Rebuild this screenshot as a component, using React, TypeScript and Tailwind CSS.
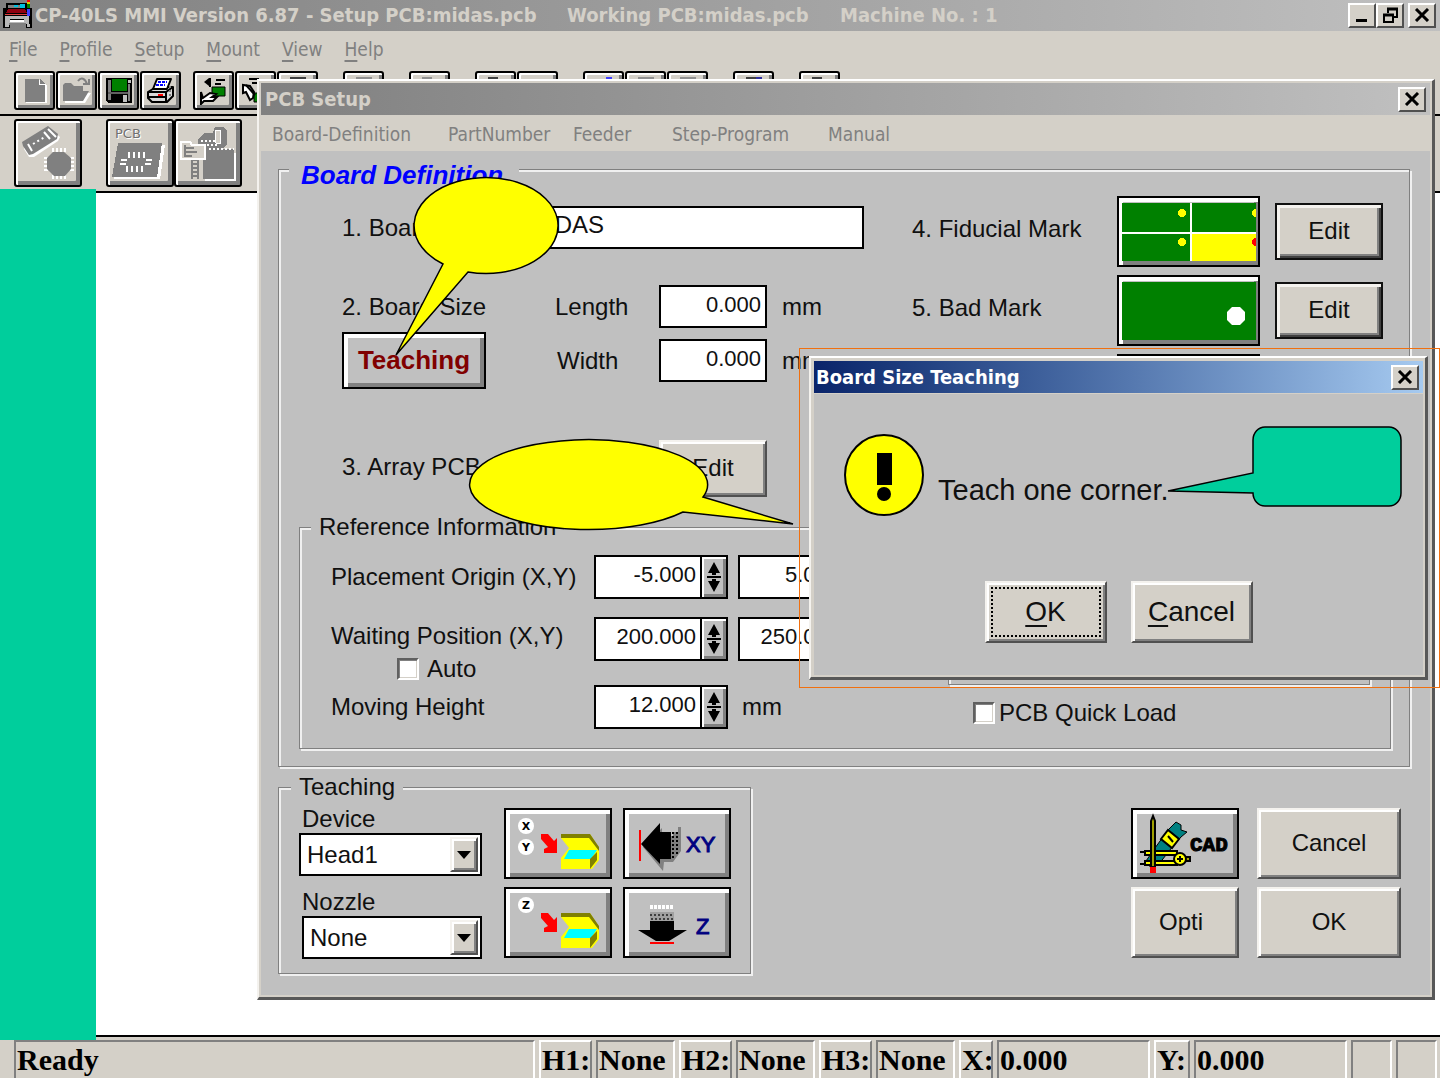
import type { ReactNode } from 'react';
import clsx from 'clsx';

const RAISED =
  'bg-[#d4d0c8] border-2 border-t-[#f4f2ee] border-l-[#f4f2ee] border-b-[#505050] border-r-[#505050] shadow-[inset_2px_2px_0_#ffffff,inset_-2px_-2px_0_#808080]';
const PICTURE =
  'bg-[#c0c0c0] border-2 border-black shadow-[inset_4px_4px_0_#ffffff,inset_-4px_-4px_0_#808080]';
const ETCHED = 'border border-[#808080] shadow-[inset_2px_2px_0_#f0f0f0,2px_2px_0_#f0f0f0]';
const WINDOW =
  'border-2 border-r-[3px] border-b-[3px] border-t-white border-l-[#f4f2ee] border-r-[#585858] border-b-[#585858] bg-[#d4d0c8] p-0.5';
const TITLE_FONT = "font-['DejaVu_Sans_Condensed','Noto_Sans',sans-serif]";

const mainMenu = ['File', 'Profile', 'Setup', 'Mount', 'View', 'Help'];

/* Icons */

function CloseIcon() {
  return (
    <svg width="16" height="14" viewBox="0 0 16 14" aria-hidden="true">
      <path d="M2 1L14 13M14 1L2 13" stroke="#000" strokeWidth="3" fill="none" />
    </svg>
  );
}

function MinimizeIcon() {
  return (
    <svg width="16" height="16" viewBox="0 0 16 16" aria-hidden="true">
      <path d="M2 12h11v3H2z" fill="#000" />
    </svg>
  );
}

function RestoreIcon() {
  return (
    <svg width="16" height="16" viewBox="0 0 16 16" fill="none" stroke="#000" strokeWidth="2" aria-hidden="true">
      <path d="M6 6V2h9v8h-3" />
      <path d="M5 2h11" strokeWidth="3" />
      <path d="M2 8h9v7H2z" />
      <path d="M1 8h11" strokeWidth="3" />
    </svg>
  );
}

function MachineIcon() {
  return (
    <svg width="30" height="30" viewBox="0 0 30 30" shapeRendering="crispEdges" aria-hidden="true">
      <path d="M3 3h22v5h4v20h-6v-3H7v3H0V8h3z" fill="#000" />
      <path d="M5 5h13v3H5z" fill="#808080" />
      <path d="M5 9h17l2 4H3z" fill="#900010" />
      <path d="M2 14h25v1H2z" fill="#e04040" />
      <path d="M2 16h24v8H2zM2 24h4v3H2zM24 24h3v3h-3z" fill="#b8b8b8" />
      <path d="M7 19h14v1H7z" fill="#000" />
      <path d="M7 20h14v2H7z" fill="#fff" />
      <path d="M6 23h17v2H6z" fill="#808080" />
      <path d="M17 4h5v4h-5zM11 5h4v2h-4z" fill="#00c0e0" />
      <path d="M24 9h3v7h-3z" fill="#4040ff" />
      <path d="M24 0h3v2h-3z" fill="#ff0000" />
      <path d="M24 2h3v2h-3z" fill="#d0d000" />
      <path d="M24 4h3v4h-3z" fill="#008000" />
    </svg>
  );
}

function NewIcon() {
  return (
    <svg width="30" height="28" viewBox="0 0 30 28" shapeRendering="crispEdges">
      <path d="M6 3h15l6 6v17H6z" fill="#fff" />
      <path d="M5 2h14v6h6v17H5z" fill="#808080" />
      <path d="M20 2l5 5h-5z" fill="#808080" />
    </svg>
  );
}

function OpenIcon() {
  return (
    <svg width="30" height="28" viewBox="0 0 30 28">
      <path d="M3 26V9h8l2 3h8v4h8l-6 10z" fill="#fff" />
      <path d="M1 24V8l2-2h6l3 3h9v5h6l-6 10z" fill="#808080" />
      <path d="M16 4c3-4 7-3 9 3M21 7h6V2" fill="none" stroke="#808080" strokeWidth="2" />
    </svg>
  );
}

function SaveIcon() {
  return (
    <svg width="30" height="28" viewBox="0 0 30 28" shapeRendering="crispEdges">
      <path d="M2 1h26v25H4l-2-2z" fill="#000" />
      <path d="M4 3h3v20H4zM24 7h2v17h-2z" fill="#808080" />
      <path d="M8 2h15v12H8z" fill="#008000" />
      <path d="M24 3h3v3h-3z" fill="#c0c0c0" />
      <path d="M19 18h4v7h-4z" fill="#c0c0c0" />
      <path d="M4 15h20v2H4z" fill="#606060" />
    </svg>
  );
}

function PrintIcon() {
  return (
    <svg width="30" height="28" viewBox="0 0 30 28" stroke="#000" strokeWidth="2" strokeLinejoin="round">
      <path d="M2 15l8-5h17v9l-6 6H6l-4-4z" fill="#d8d8d8" />
      <path d="M7 12l4-10h14l-4 10z" fill="#fff" />
      <path d="M2 15h18l7-5M20 15v9M3 20h17" fill="none" />
      <path d="M12 5h9M10 8h9" stroke="#0000ff" strokeDasharray="3 1" />
      <path d="M12 18h5" stroke="#ff0000" />
      <path d="M24 9v10" stroke="#808080" strokeDasharray="2 2" />
    </svg>
  );
}

function BoardInIcon() {
  return (
    <svg width="30" height="28" viewBox="0 0 30 28">
      <path d="M13 10h13v9H13z" fill="#008000" stroke="#000" />
      <path d="M11 1v9M17 3h9M16 7h6" fill="none" stroke="#000" strokeWidth="2" />
      <path d="M5 5l5-4v8z" />
      <path d="M2 15v12l3-3h9l4-4h-5l4-3-6-1-7 5z" fill="#fff" stroke="#000" strokeWidth="2" />
    </svg>
  );
}

function BoardOutIcon() {
  return (
    <svg width="30" height="28" viewBox="0 0 30 28">
      <path d="M13 16h13v9H13z" fill="#008000" stroke="#000" />
      <path d="M8 2h10M11 6h8" fill="none" stroke="#000" strokeWidth="2" />
      <path d="M2 8v8l3-1 4 8 3-2 1-6-4-6z" fill="#fff" stroke="#000" strokeWidth="2" />
      <path d="M5 8l9 10" stroke="#000" strokeWidth="2" />
    </svg>
  );
}

function BarIcon({ color = '#404040', accent = color }: { color?: string; accent?: string }) {
  return (
    <svg width="30" height="28" viewBox="0 0 30 28" shapeRendering="crispEdges">
      <path d="M7 0h10v2H7z" fill={color} />
      <path d="M17 0h6v2h-6z" fill={accent} />
    </svg>
  );
}

function PartsIcon() {
  return (
    <svg width="56" height="56" viewBox="0 0 56 56">
      <path d="M4 19L29 3l11 9-2 4-24 16h-5L4 24z" fill="#fff" />
      <path d="M2 17L28 1l10 8-1 5-24 15-4 1-6-9z" fill="#808080" />
      <path d="M8 19l4 7M24 7l6 7M28 4l8 8" stroke="#fff" strokeWidth="2" />
      <path d="M13 19l12-7" stroke="#fff" strokeWidth="2" strokeDasharray="2 3" />
      <path
        d="M33 27v-4M37 27v-4M41 27v-4M45 27v-4M33 50v4M37 50v4M41 50v4M45 50v4M28 33h-4M28 37h-4M28 41h-4M28 45h-4M50 33h4M50 37h4M50 41h4M50 45h4"
        stroke="#fff"
        strokeWidth="2"
      />
      <path d="M27 33l6-6h11l7 6v11l-6 7H34l-7-7z" fill="#808080" />
    </svg>
  );
}

function PcbIcon() {
  return (
    <svg width="56" height="56" viewBox="0 0 56 56" shapeRendering="crispEdges">
      <text x="4" y="14" fontSize="13" fontFamily="DejaVu Sans" fill="#fff">
        PCB
      </text>
      <text x="3" y="13" fontSize="13" fontFamily="DejaVu Sans" fill="#707070">
        PCB
      </text>
      <path d="M8 20h45l-5 34H2z" fill="#fff" />
      <path d="M6 18h44l-5 34H0z" fill="#808080" />
      <path
        d="M17 27v6M22 27v6M27 27v6M32 27v6M15 41v6M20 41v6M25 41v6M30 41v6M9 35h6M8 39h6M34 35h6M33 39h6"
        stroke="#fff"
        strokeWidth="2"
      />
    </svg>
  );
}

function FeederIcon() {
  return (
    <svg width="58" height="56" viewBox="0 0 58 56" shapeRendering="crispEdges">
      <path d="M26 28h31v28H26z" fill="#fff" />
      <path d="M24 24h31v30H24zM12 34h8v20h-8z" fill="#808080" />
      <path d="M19 14l6-6h9l2-6h8l4 4v14l-8 6H23l-4-6z" fill="#808080" />
      <path d="M36 5h5v13h-4z" fill="#d4d0c8" stroke="#fff" />
      <path d="M22 16h16M24 20h14M30 24h25" stroke="#fff" strokeWidth="2" strokeDasharray="2 2" />
      <path d="M2 17h9l2 3h13v14H2z" fill="#d4d0c8" stroke="#fff" strokeWidth="2" />
      <path d="M6 20v12M6 23h9M6 27h12M6 31h7" stroke="#808080" strokeWidth="2" />
      <path d="M16 36v18" stroke="#d4d0c8" strokeWidth="4" strokeDasharray="2 2" />
    </svg>
  );
}

function FiducialPicture() {
  return (
    <svg className="block" width="134" height="58" viewBox="0 0 134 58" shapeRendering="crispEdges">
      <path d="M0 0h134v58H0z" fill="#008000" />
      <path d="M70 30h64v28H70z" fill="#ffff00" />
      <path d="M69 0v58M0 30h134" stroke="#fff" strokeWidth="2" />
      <circle cx="60" cy="10" r="4" fill="#ffff00" />
      <circle cx="60" cy="39" r="4" fill="#ffff00" />
      <circle cx="134" cy="10" r="4" fill="#ffff00" />
      <circle cx="134" cy="39" r="4" fill="#ff0000" />
    </svg>
  );
}

function BadMarkPicture() {
  return (
    <svg className="block" width="134" height="58" viewBox="0 0 134 58">
      <path d="M0 0h134v58H0z" fill="#008000" />
      <path d="M110 25h8l5 5v8l-5 5h-8l-5-5v-8z" fill="#fff" />
    </svg>
  );
}

function FeederTeachIcon({ marks }: { marks: string[] }) {
  return (
    <svg width="98" height="62" viewBox="0 0 98 62">
      {marks.map((mark, i) => (
        <g key={mark}>
          <circle cx="17" cy={13 + i * 21} r="8" fill="#fff" />
          <text
            x="17"
            y={17 + i * 21}
            textAnchor="middle"
            fontSize="11"
            fontWeight="bold"
            fontFamily="DejaVu Sans"
          >
            {mark}
          </text>
        </g>
      ))}
      <path d="M32 21h7l6 7 3-3v15H35v-4l4-2-7-8z" fill="#ff0000" />
      <path d="M52 21h29l9 14v12l-7 9H52V45l8-10-8-10z" fill="#ffff00" />
      <path d="M52 21h29l9 13v4L80 25H52z" fill="#808000" />
      <path d="M60 37h28l-6 9H55z" fill="#00ffff" />
      <path d="M88 39v8l-7 9V46z" fill="#808000" />
    </svg>
  );
}

function MoveXYIcon() {
  return (
    <svg width="98" height="62" viewBox="0 0 98 62">
      <path d="M15 17v31" stroke="#ff0000" strokeWidth="2" />
      <path d="M18 34l19-19v8h11v-4h5v-5h3v24l-8 11h-9l-1 9z" fill="#808080" />
      <path d="M16 31L35 10v9h11v27H35v5z" fill="#000" />
      <path d="M48 19v27M52 19v24" stroke="#000" strokeWidth="2" strokeDasharray="2 2" />
      <text x="61" y="39" fontSize="22" fontFamily="Liberation Sans" fill="#000080" stroke="#000080">
        XY
      </text>
    </svg>
  );
}

function MoveZIcon() {
  return (
    <svg width="98" height="62" viewBox="0 0 98 62">
      <path d="M25 15h24" stroke="#fff" strokeWidth="4" strokeDasharray="3 1" />
      <path d="M25 20h24v10H25z" fill="#a0a0a0" />
      <path d="M25 23h24M26 27h24" stroke="#404040" strokeWidth="2" strokeDasharray="2 2" />
      <path d="M25 29h24v9h13l-18 11H31L13 38h12z" fill="#000" />
      <path d="M25 51h24" stroke="#ff0000" strokeWidth="2" />
      <text x="71" y="42" fontSize="22" fontFamily="Liberation Sans" fill="#000080" stroke="#000080">
        Z
      </text>
    </svg>
  );
}

function CadIcon() {
  return (
    <svg width="98" height="62" viewBox="0 0 98 62">
      <path d="M13 48l9-13 13-18 8-8 5 3v5l6 2-6 5-8 9-14 18-8 4z" fill="#008080" stroke="#000" />
      <path d="M35 17l11 9-7 9-11-9z" fill="#ffff00" stroke="#000" strokeWidth="2" />
      <path d="M35 23l5 6" stroke="#000" strokeWidth="2" />
      <path d="M12 38h32v4H12zM12 48h32v4H12z" fill="#ffff00" stroke="#000" strokeWidth="2" />
      <path d="M7 39h6M7 51h6" stroke="#000" strokeWidth="2" />
      <path d="M50 44h7v4h-7z" fill="#a0a000" stroke="#000" strokeWidth="2" />
      <circle cx="47" cy="46" r="6" fill="#ffff00" stroke="#000" strokeWidth="2" />
      <path d="M44 46h6M47 43v6" stroke="#000" strokeWidth="2" />
      <path d="M18 8l2-5 2 5v46h-4z" fill="#a0a000" stroke="#000" strokeWidth="2" />
      <path d="M17 54h6v6h-6z" fill="#ff0000" />
      <text x="57" y="38" fontSize="21" fontWeight="bold" fontFamily="Liberation Mono" stroke="#000">
        CAD
      </text>
    </svg>
  );
}

/* Controls */

function CaptionButton({ label, children }: { label: string; children: ReactNode }) {
  return (
    <button
      aria-label={label}
      className="flex h-[25px] w-7 items-center justify-center border-2 border-t-white border-l-white border-r-[#505050] border-b-[#505050] bg-[#d4d0c8]"
    >
      {children}
    </button>
  );
}

function ToolButton({ label, children }: { label: string; children?: ReactNode }) {
  return (
    <button
      aria-label={label}
      className="flex h-[39px] w-[41px] items-center justify-center rounded-[3px] border-2 border-black bg-[#d4d0c8] shadow-[inset_2px_2px_0_#ffffff,inset_-3px_-3px_0_#808080]"
    >
      {children}
    </button>
  );
}

function BigToolButton({ label, children }: { label: string; children: ReactNode }) {
  return (
    <button
      aria-label={label}
      className="flex h-[68px] w-[68px] items-center justify-center rounded-[3px] border-2 border-black bg-[#d4d0c8] shadow-[inset_2px_2px_0_#ffffff,inset_-4px_-4px_0_#808080]"
    >
      {children}
    </button>
  );
}

function EditButton({ outlined = false }: { outlined?: boolean }) {
  return (
    <button
      className={clsx(
        'h-[57px] w-[108px] pb-0.5',
        outlined
          ? 'border-2 border-[#101010] bg-[#d4d0c8] shadow-[inset_3px_3px_0_#f4f2ee,inset_-2px_-2px_0_#404040,inset_-4px_-4px_0_#808080]'
          : RAISED,
      )}
    >
      Edit
    </button>
  );
}

function NumberField({ label, value }: { label: string; value: string }) {
  return (
    <input
      aria-label={label}
      defaultValue={value}
      className="h-[43px] w-[108px] border-2 border-black bg-white pr-1 pb-1 text-right text-[22px]"
    />
  );
}

function SpinField({ label, value }: { label: string; value: string }) {
  return (
    <div className="flex h-11 w-[134px]">
      <input
        aria-label={label}
        defaultValue={value}
        className="w-[108px] border-2 border-black bg-white pr-1 pb-1 text-right text-[22px]"
      />
      <div className="flex w-[26px] flex-col border-2 border-l-0 border-black bg-[#c0c0c0] shadow-[inset_2px_2px_0_#ffffff,inset_-3px_-3px_0_#808080]">
        <button aria-label={`${label} up`} className="flex flex-1 items-end justify-center">
          <svg width="14" height="15" viewBox="0 0 14 15">
            <path d="M7 0l6 11H9v2H5v-2H1zM0 14h14v1H0z" />
          </svg>
        </button>
        <button aria-label={`${label} down`} className="flex flex-1 items-start justify-center">
          <svg width="14" height="15" viewBox="0 0 14 15">
            <path d="M0 0h14v1H0zM5 2h4v2h4L7 15 1 4h4z" />
          </svg>
        </button>
      </div>
    </div>
  );
}

function CheckField({ label, gap }: { label: string; gap: string }) {
  return (
    <label className={clsx('flex h-6 items-center', gap)}>
      <input
        type="checkbox"
        className="h-[22px] w-[22px] appearance-none border-2 border-t-[#606060] border-l-[#606060] border-r-white border-b-white bg-white shadow-[inset_1px_1px_0_#808080,inset_-1px_-1px_0_#d4d0c8]"
      />
      {label}
    </label>
  );
}

function DropDown({ id, label, value, inset }: { id: string; label: string; value: string; inset?: boolean }) {
  return (
    <div className="flex flex-col">
      <label htmlFor={id} className="h-7 pl-[3px] leading-7">
        {label}
      </label>
      <div className={clsx('relative flex h-[43px]', inset && 'ml-[3px]')}>
        <select id={id} className="w-full appearance-none border-2 border-black bg-white pl-1.5">
          <option>{value}</option>
        </select>
        <span
          className={clsx(
            'pointer-events-none absolute top-1 right-1 flex h-[35px] w-7 items-center justify-center',
            RAISED,
          )}
        >
          <svg width="14" height="8" viewBox="0 0 14 8">
            <path d="M0 0h14L7 8z" />
          </svg>
        </span>
      </div>
    </div>
  );
}

function StatusCell({ children, width, raised }: { children?: ReactNode; width: string; raised?: boolean }) {
  return (
    <div
      className={clsx(
        'h-[38px] overflow-hidden border-2 border-b-0 pl-px whitespace-nowrap',
        raised
          ? 'border-t-white border-l-white border-r-[#808080]'
          : 'border-t-[#808080] border-l-[#808080] border-r-white',
        width,
      )}
    >
      {children}
    </div>
  );
}

/* Windows */

function PcbSetupWindow() {
  return (
    <section
      aria-label="PCB Setup"
      className={clsx('absolute top-[79px] right-[5px] left-[257px] text-2xl', WINDOW)}
    >
      <header
        className={clsx(
          'flex h-8 items-center justify-between bg-linear-to-r from-[#808080] to-[#c0c0c0] pr-1 pl-1 text-xl font-bold text-[#d4d0c8]',
          TITLE_FONT,
        )}
      >
        <h2>PCB Setup</h2>
        <CaptionButton label="Close PCB Setup">
          <CloseIcon />
        </CaptionButton>
      </header>
      <nav className={clsx('flex h-9 items-center pt-[3px] pl-[11px] text-[19px] text-[#808080]', TITLE_FONT)}>
        <a href="#board" className="w-44">Board-Definition</a>
        <a href="#part" className="w-[125px]">PartNumber</a>
        <a href="#feeder" className="w-[99px]">Feeder</a>
        <a href="#step" className="w-[156px]">Step-Program</a>
        <a href="#manual">Manual</a>
      </nav>

      <div className="bg-[#c0c0c0] pr-5 pb-[21px] pl-[17px]">
        <fieldset className={clsx('pb-[17px]', ETCHED)}>
          <legend className="ml-2.5 bg-[#c0c0c0] pt-3 pr-4 pl-3 text-[26px] leading-6 font-bold text-[#0000ff] italic">
            Board Definition
          </legend>

          <div className="flex justify-between pr-[26px] pl-[63px]">
            <div>
              <div className="mt-[19px] flex items-center">
                <label htmlFor="board-id" className="w-[178px]">1. Board ID</label>
                <input
                  id="board-id"
                  defaultValue="MIDAS"
                  className="h-[43px] w-[344px] border-2 border-black bg-white pb-1.5 pl-1.5"
                />
              </div>
              <div className="mt-9 flex items-center">
                <span className="w-[213px]">2. Board Size</span>
                <span className="w-[104px]">Length</span>
                <NumberField label="Length" value="0.000" />
                <span className="ml-[15px]">mm</span>
              </div>
              <div className="mt-1 flex items-center">
                <div className="w-[215px]">
                  <button className={clsx('h-[57px] w-36 text-[26px] font-bold text-[#800000]', PICTURE)}>
                    Teaching
                  </button>
                </div>
                <span className="w-[102px]">Width</span>
                <NumberField label="Width" value="0.000" />
                <span className="ml-[15px]">mm</span>
              </div>
              <div className="mt-[51px] flex items-center">
                <span className="w-[317px] pb-1">3. Array PCB</span>
                <EditButton />
              </div>
            </div>

            <div className="mt-[9px] flex flex-col gap-2">
              <div className="flex items-center gap-[15px]">
                <span className="w-[190px] pb-1.5">4. Fiducial Mark</span>
                <button aria-label="Fiducial mark picture" className={clsx('h-[71px] w-[143px] pl-[3px]', PICTURE)}>
                  <FiducialPicture />
                </button>
                <EditButton outlined />
              </div>
              <div className="flex items-center gap-[15px]">
                <span className="w-[190px] pb-1.5">5. Bad Mark</span>
                <button aria-label="Bad mark picture" className={clsx('h-[71px] w-[143px] pl-[3px]', PICTURE)}>
                  <BadMarkPicture />
                </button>
                <EditButton outlined />
              </div>
              <div className="flex items-center gap-[15px]">
                <span className="w-[190px]" />
                <button aria-label="Mark picture" className={clsx('h-[71px] w-[143px]', PICTURE)} />
              </div>
            </div>
          </div>

          <fieldset className={clsx('mt-4 mr-[18px] ml-5 flex justify-between pr-5 pb-[19px] pl-[31px]', ETCHED)}>
            <legend className="-ml-5 bg-[#c0c0c0] px-2 leading-7">Reference Information</legend>
            <div>
              <div className="mt-3.5 flex items-center">
                <span className="w-[263px]">Placement Origin (X,Y)</span>
                <SpinField label="Placement origin X" value="-5.000" />
                <div className="ml-2.5">
                  <SpinField label="Placement origin Y" value="5.000" />
                </div>
              </div>
              <div className="mt-[18px] flex items-center">
                <span className="w-[263px] pb-1.5">Waiting Position (X,Y)</span>
                <SpinField label="Waiting position X" value="200.000" />
                <div className="ml-2.5">
                  <SpinField label="Waiting position Y" value="250.000" />
                </div>
              </div>
              <div className="-mt-1 mb-1 ml-[66px]">
                <CheckField label="Auto" gap="gap-2" />
              </div>
              <div className="flex items-center">
                <span className="w-[263px]">Moving Height</span>
                <SpinField label="Moving height" value="12.000" />
                <span className="ml-3.5">mm</span>
              </div>
            </div>
            <div className="w-[422px]">
              <div className={clsx('mt-3.5 h-[130px]', ETCHED)} />
              <div className="mt-4 ml-[25px]">
                <CheckField label="PCB Quick Load" gap="gap-1" />
              </div>
            </div>
          </fieldset>
        </fieldset>

        <div className="mt-1.5 flex items-start justify-between">
          <fieldset className={clsx('pr-[19px] pb-3.5 pl-5', ETCHED)}>
            <legend className="-ml-2 bg-[#c0c0c0] px-2 leading-7">Teaching</legend>
            <div className="flex gap-[22px] pt-1">
              <div className="flex w-[183px] flex-col gap-3">
                <DropDown id="device" label="Device" value="Head1" />
                <DropDown id="nozzle" label="Nozzle" value="None" inset />
              </div>
              <div className="mt-[3px] grid grid-cols-2 content-start gap-x-[11px] gap-y-2">
                <button aria-label="Feeder XY" className={clsx('h-[71px] w-[108px] pl-[3px]', PICTURE)}>
                  <FeederTeachIcon marks={['X', 'Y']} />
                </button>
                <button aria-label="Move XY" className={clsx('h-[71px] w-[108px]', PICTURE)}>
                  <MoveXYIcon />
                </button>
                <button aria-label="Feeder Z" className={clsx('h-[71px] w-[108px] pl-[3px]', PICTURE)}>
                  <FeederTeachIcon marks={['Z']} />
                </button>
                <button aria-label="Move Z" className={clsx('h-[71px] w-[108px]', PICTURE)}>
                  <MoveZIcon />
                </button>
              </div>
            </div>
          </fieldset>

          <div className="mt-[35px] mr-[9px] grid grid-cols-[108px_144px] gap-x-[18px] gap-y-2">
            <button aria-label="CAD" className={clsx('h-[71px]', PICTURE)}>
              <CadIcon />
            </button>
            <button className={clsx('h-[71px] pb-0.5', RAISED)}>Cancel</button>
            <button className={clsx('h-[71px] pr-2 pb-0.5', RAISED)}>Opti</button>
            <button className={clsx('h-[71px] pb-0.5', RAISED)}>OK</button>
          </div>
        </div>
      </div>
    </section>
  );
}

function TeachingDialog() {
  return (
    <div className="absolute top-[348px] left-[799px] border border-[#f07010] pt-[7px] pr-[11px] pb-[7px] pl-[9px]">
      <section
        role="dialog"
        aria-label="Board Size Teaching"
        className={clsx('w-[619px] text-[29px]', WINDOW)}
      >
        <header
          className={clsx(
            'mt-px ml-px flex h-8 items-center justify-between bg-linear-to-r from-[#0a246a] to-[#a6caf0] pr-1 pl-0.5 text-xl font-bold text-white',
            TITLE_FONT,
          )}
        >
          <h2>Board Size Teaching</h2>
          <CaptionButton label="Close Board Size Teaching">
            <CloseIcon />
          </CaptionButton>
        </header>
        <div className="mt-px ml-px bg-[#c0c0c0] pt-10">
          <div className="flex items-start pl-[30px]">
            <svg width="80" height="84" viewBox="0 0 80 84" aria-hidden="true">
              <ellipse cx="40" cy="41" rx="39" ry="40" fill="#ffff00" stroke="#000" strokeWidth="2" />
              <path d="M33 19h15v32H33z" />
              <circle cx="40" cy="60" r="7" />
            </svg>
            <p className="mt-9 ml-3.5 leading-10">Teach one corner.</p>
          </div>
          <div className="mt-[63px] flex justify-center gap-6 pb-8 text-[28px]">
            <button className={clsx('h-[62px] w-[122px] p-1', RAISED)}>
              <span className="flex h-full items-center justify-center border-2 border-dotted border-black">
                <span>
                  <u className="decoration-2 underline-offset-4">O</u>K
                </span>
              </span>
            </button>
            <button className={clsx('h-[62px] w-[122px]', RAISED)}>
              <u className="decoration-2 underline-offset-4">C</u>ancel
            </button>
          </div>
        </div>
      </section>
    </div>
  );
}

function Callouts() {
  return (
    <svg
      className="pointer-events-none absolute top-0 left-0"
      width="1440"
      height="600"
      viewBox="0 0 1440 600"
      stroke="#000"
      strokeWidth="1.5"
      aria-hidden="true"
    >
      <path d="M443 264L396 355L468 272A72 48 0 1 0 443 264Z" fill="#ffff00" />
      <path d="M703 497L793 524L683 512A119 45 0 1 1 703 497Z" fill="#ffff00" />
      <path
        d="M1265 427h124a12 13 0 0 1 12 13v53a12 13 0 0 1-12 13h-124a12 13 0 0 1-12-13L1168 491L1253 473v-33a12 13 0 0 1 12-13Z"
        fill="#00ce9c"
      />
    </svg>
  );
}

export default function App() {
  return (
    <div className="relative flex min-h-screen flex-col overflow-hidden bg-[#d4d0c8] font-['Liberation_Sans',Arial,sans-serif] text-[#101010]">
      <header
        className={clsx(
          'flex h-[31px] items-center bg-linear-to-r from-[#808080] to-[#c0c0c0] pr-1 pb-px pl-[3px] text-xl font-bold text-[#d4d0c8]',
          TITLE_FONT,
        )}
      >
        <MachineIcon />
        <h1 className="ml-0.5 flex flex-1 whitespace-nowrap">
          <span className="w-[532px]">CP-40LS MMI Version 6.87 - Setup PCB:midas.pcb</span>
          <span className="w-[273px]">Working PCB:midas.pcb</span>
          <span>Machine No. : 1</span>
        </h1>
        <CaptionButton label="Minimize">
          <MinimizeIcon />
        </CaptionButton>
        <CaptionButton label="Restore">
          <RestoreIcon />
        </CaptionButton>
        <div className="ml-1">
          <CaptionButton label="Close">
            <CloseIcon />
          </CaptionButton>
        </div>
      </header>

      <nav className={clsx('flex h-9 items-center gap-[22px] pl-[9px] text-[19px] text-[#808080]', TITLE_FONT)}>
        {mainMenu.map((item) => (
          <a key={item} href={`#${item.toLowerCase()}`}>
            <u className="decoration-2 underline-offset-4">{item[0]}</u>
            {item.slice(1)}
          </a>
        ))}
      </nav>

      <div className="flex gap-[25px] border-b-2 border-black pt-1 pb-1 pl-3.5">
        <div className="flex gap-3">
          <div className="flex gap-px">
            <ToolButton label="New"><NewIcon /></ToolButton>
            <ToolButton label="Open"><OpenIcon /></ToolButton>
            <ToolButton label="Save"><SaveIcon /></ToolButton>
            <ToolButton label="Print"><PrintIcon /></ToolButton>
          </div>
          <div className="flex gap-px">
            <ToolButton label="Board in"><BoardInIcon /></ToolButton>
            <ToolButton label="Board out"><BoardOutIcon /></ToolButton>
            <ToolButton label="Board list"><BarIcon /></ToolButton>
          </div>
        </div>
        <ToolButton label="Profile"><BarIcon color="#909090" /></ToolButton>
        <ToolButton label="Convert"><BarIcon color="#909090" accent="#d4d0c8" /></ToolButton>
        <div className="flex gap-px">
          <ToolButton label="Mount"><BarIcon accent="#d4d0c8" /></ToolButton>
          <ToolButton label="Stop" />
        </div>
        <div className="flex gap-px">
          <ToolButton label="Origin"><BarIcon color="#d4d0c8" accent="#4040ff" /></ToolButton>
          <ToolButton label="Step"><BarIcon color="#909090" /></ToolButton>
          <ToolButton label="Cycle"><BarIcon color="#909090" /></ToolButton>
        </div>
        <ToolButton label="Monitor"><BarIcon accent="#3030a0" /></ToolButton>
        <ToolButton label="About"><BarIcon accent="#d4d0c8" /></ToolButton>
      </div>

      <div className="flex gap-6 pt-[3px] pb-0.5 pl-3.5">
        <BigToolButton label="Parts"><PartsIcon /></BigToolButton>
        <div className="flex">
          <BigToolButton label="PCB setup"><PcbIcon /></BigToolButton>
          <BigToolButton label="Feeder setup"><FeederIcon /></BigToolButton>
        </div>
      </div>

      <main className="flex flex-1">
        <aside className="w-24 bg-[#00ce9c]" />
        <div className="mt-[2px] mb-[3px] flex-1 border-y-2 border-black bg-white" />
      </main>

      <footer className="flex gap-1 border-b-2 border-white pr-[3px] pl-3.5 font-['Liberation_Serif',serif] text-[30px] leading-9 font-bold text-black">
        <StatusCell width="flex-1">Ready</StatusCell>
        <StatusCell width="w-[53px]" raised>H1:</StatusCell>
        <StatusCell width="w-[79px]">None</StatusCell>
        <StatusCell width="w-[53px]" raised>H2:</StatusCell>
        <StatusCell width="w-[79px]">None</StatusCell>
        <StatusCell width="w-[53px]" raised>H3:</StatusCell>
        <StatusCell width="w-[79px]">None</StatusCell>
        <StatusCell width="w-[34px]" raised>X:</StatusCell>
        <StatusCell width="w-[153px]">0.000</StatusCell>
        <StatusCell width="w-[36px]" raised>Y:</StatusCell>
        <StatusCell width="w-[153px]">0.000</StatusCell>
        <StatusCell width="w-[41px]" />
        <StatusCell width="w-[41px]" />
      </footer>

      <PcbSetupWindow />
      <TeachingDialog />
      <Callouts />
    </div>
  );
}
